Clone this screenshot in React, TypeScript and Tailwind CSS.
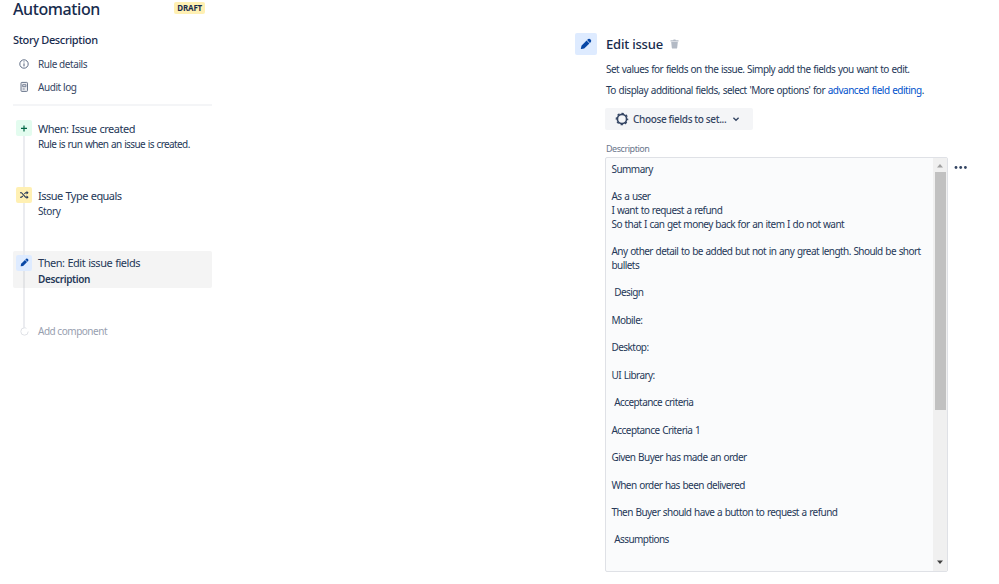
import type { ReactNode } from "react";

type Step = {
  title: string;
  detail: string;
  iconClass: string;
  icon: ReactNode;
  selected?: boolean;
  titleClass: string;
  detailClass: string;
};

function PencilIcon({ size }: { size: number }) {
  return (
    <svg width={size} height={size} viewBox="0 0 12 12" fill="#0747a6">
      <path d="M.9 10.6 1.5 7.8 6.6 2.6 9.4 5.4 4.2 10.5 1.4 11.1Q.8 11.2.9 10.6Z" />
      <path d="M7.1 2.1 8.1 1.1Q9.3.2 10.6 1.4 11.8 2.7 10.9 3.9L9.9 4.9Z" />
    </svg>
  );
}

const steps: Step[] = [
  {
    title: "When: Issue created",
    detail: "Rule is run when an issue is created.",
    iconClass: "bg-[#e3fcef]",
    icon: (
      <svg width="16" height="16" viewBox="0 0 16 16" stroke="#006644" strokeWidth="1.2">
        <path d="M8 5.4v6M5 8.4h6" />
      </svg>
    ),
    titleClass: "pt-px tracking-[-0.48px]",
    detailClass: "tracking-[-0.6px]",
  },
  {
    title: "Issue Type equals",
    detail: "Story",
    iconClass: "bg-[#fff0b3]",
    icon: (
      <svg width="16" height="16" viewBox="0 0 16 16" fill="none" stroke="#253858" strokeWidth="1.1">
        <path d="M4 5.7h1.5l4 4.5h2.3M4 10.2h1.5l1.3-1.4M8.4 7l1.1-1.3h2.3" />
        <path d="M10.7 4.2l1.7 1.5-1.7 1.5zM10.7 8.7l1.7 1.5-1.7 1.5z" fill="#253858" strokeWidth=".3" />
      </svg>
    ),
    titleClass: "pt-px tracking-[-0.54px]",
    detailClass: "tracking-[-0.4px]",
  },
  {
    title: "Then: Edit issue fields",
    detail: "Description",
    iconClass: "bg-[#deebff]",
    icon: <PencilIcon size={9} />,
    selected: true,
    titleClass: "tracking-[-0.48px]",
    detailClass: "pt-px font-semibold tracking-[-0.36px]",
  },
];

const description = [
  "Summary",
  "",
  "As a user",
  "I want to request a refund",
  "So that I can get money back for an item I do not want",
  "",
  "Any other detail to be added but not in any great length. Should be short",
  "bullets",
  "",
  " Design",
  "",
  "Mobile:",
  "",
  "Desktop:",
  "",
  "UI Library:",
  "",
  " Acceptance criteria",
  "",
  "Acceptance Criteria 1",
  "",
  "Given Buyer has made an order",
  "",
  "When order has been delivered",
  "",
  "Then Buyer should have a button to request a refund",
  "",
  " Assumptions",
];

function Sidebar() {
  return (
    <aside className="ml-[13px] w-[199px] shrink-0">
      <div className="flex h-[18px] items-start justify-between pr-[7px]">
        <h1 className="text-[16px] leading-[18px] font-medium tracking-[-0.4px]">Automation</h1>
        <span className="mt-[2px] h-[12px] rounded-[2px] bg-[#fff0b3] px-[3px] text-[8px] leading-[11px] font-bold tracking-[-0.2px]">
          DRAFT
        </span>
      </div>
      <h2 className="mt-[14px] text-[11px] leading-4 font-medium tracking-[-0.35px]">Story Description</h2>
      <nav className="mt-[8px] text-[10px] leading-4 tracking-[-0.42px] text-[#344563]">
        <a className="flex items-center pl-[6px]">
          <svg className="mr-[9px]" width="10" height="10" viewBox="0 0 10 10" fill="none" stroke="#505f79">
            <circle cx="5" cy="5" r="4.2" strokeWidth=".9" />
            <path d="M5 4.4v3M5 2.4v1" />
          </svg>
          Rule details
        </a>
        <a className="mt-[7px] flex items-center pl-[6px]">
          <svg className="mr-[9px]" width="10" height="12" viewBox="0 0 10 12" fill="none" stroke="#6b778c">
            <rect x="2" y="1.4" width="6.5" height="9" rx=".8" fill="#ebecf0" />
            <path d="M3.7 3.7h3.2v2H3.7zM3.7 8h2" strokeWidth=".9" />
          </svg>
          Audit log
        </a>
      </nav>
      <div className="mt-[9px] h-[2px] bg-[#f4f5f7]" />

      <div className="relative mt-[9.9px]">
        <div className="absolute top-[16px] left-[10px] h-[196px] w-[2px] bg-[#ebecf0]" />
        {steps.map((step) => (
          <div key={step.title} className="h-[67.5px]">
            <div
              className={`flex h-[37px] rounded-[2px] pt-[4px] pl-[3px] ${step.selected ? "bg-[#f4f4f4]" : ""}`}
            >
              <span
                className={`relative flex size-4 shrink-0 items-center justify-center rounded-[2px] ${step.iconClass}`}
              >
                {step.icon}
              </span>
              {step.selected && <span className="absolute top-[155px] left-[10px] h-[17px] w-[2px] bg-[#e3e4e6]" />}
              <div className="ml-[6px] [word-spacing:0.6px] whitespace-nowrap text-[#253858]">
                <div className={`text-[11px] leading-4 ${step.titleClass}`}>{step.title}</div>
                <div className={`text-[10px] leading-[15px] ${step.detailClass}`}>{step.detail}</div>
              </div>
            </div>
          </div>
        ))}
        <div className="mt-[5px] flex h-4 items-center pl-[7px]">
          <svg className="relative" width="9" height="9" viewBox="0 0 9 9">
            <circle cx="4.5" cy="4.5" r="3.7" fill="#fff" stroke="#dfe1e6" strokeDasharray="19 5" />
          </svg>
          <span className="ml-[9px] pt-px text-[10px] tracking-[-0.48px] text-[#97a0af]">Add component</span>
        </div>
      </div>
    </aside>
  );
}

function Scrollbar() {
  return (
    <div className="flex w-[14px] shrink-0 flex-col items-center bg-[#f0f0f0]">
      <svg width="14" height="14" viewBox="0 0 14 14">
        <path d="M7 6 L10 9.5 H4 Z" fill="#a0a0a0" />
      </svg>
      <div className="h-[238px] w-[11px] bg-[#c1c1c1]" />
      <svg className="mt-auto" width="14" height="16" viewBox="0 0 14 16">
        <path d="M4 5.5 H10 L7 9 Z" fill="#404040" />
      </svg>
    </div>
  );
}

function EditIssue() {
  return (
    <main className="mt-[33px] ml-[363px] flex">
      <div className="flex size-[22px] items-center justify-center rounded-[2px] bg-[#deebff]">
        <PencilIcon size={12} />
      </div>
      <div className="ml-[8px] w-[343px]">
        <div className="flex h-[22px] items-center pl-px">
          <h2 className="pt-px text-[13px] font-medium tracking-[-0.2px]">Edit issue</h2>
          <svg className="ml-[7px]" width="9" height="10" viewBox="0 0 9 10" fill="#b3bac5">
            <path d="M.5 1.2h2.6L3.6.4h1.8l.5.8h2.6v1.2h-8zM1.2 3.1h6.6L7.2 8.7q-.1.9-1 .9H2.8q-.9 0-1-.9z" />
          </svg>
        </div>
        <p className="mt-[6px] pl-px text-[10px] leading-4 tracking-[-0.53px] [word-spacing:0.6px] whitespace-nowrap text-[#253858]">
          Set values for fields on the issue. Simply add the fields you want to edit.
        </p>
        <p className="mt-[5px] pl-px text-[10px] leading-4 tracking-[-0.5px] [word-spacing:0.6px] whitespace-nowrap text-[#253858]">
          To display additional fields, select 'More options' for{" "}
          <a className="text-[#0052cc]">advanced field editing</a>.
        </p>
        <button className="mt-[10px] flex h-[22px] w-[148px] items-center rounded-[2px] bg-[#f4f5f7] pl-[10px] text-[10px] font-medium text-[#344563]">
          <svg width="14" height="14" viewBox="0 0 14 14" fill="none" stroke="#344563">
            <circle cx="7" cy="7" r="4.6" strokeWidth="1.7" />
            <circle cx="7" cy="7" r="5.7" strokeWidth="1.2" strokeDasharray="2.3 2.177" strokeDashoffset="1.15" />
          </svg>
          <span className="ml-[4px] tracking-[-0.36px] whitespace-nowrap">Choose fields to set...</span>
          <svg className="ml-[6px]" width="8" height="8" viewBox="0 0 8 8" fill="none" stroke="#344563" strokeWidth="1.4">
            <path d="M1.4 2.8 4 5.2l2.6-2.4" />
          </svg>
        </button>
        <div className="mt-[12px] pl-px text-[9px] leading-[14px] tracking-[-0.45px] text-[#6b778c]">Description</div>
        <div className="mt-[1px] flex h-[415px] rounded-[2px] border border-[#dfe1e6] bg-[#fafbfc]">
          <div className="flex-1 overflow-hidden pt-[5px] pl-[5.5px] text-[10px] tracking-[-0.56px] [word-spacing:0.6px] text-[#253858]">
            {description.map((line, i) => (
              <div key={i} className="h-[13.72px] leading-[13.72px] whitespace-pre">
                {line}
              </div>
            ))}
          </div>
          <Scrollbar />
        </div>
      </div>
      <svg className="mt-[132px] ml-[6px]" width="14" height="5" viewBox="0 0 14 5" fill="#344563">
        <circle cx="2" cy="2.5" r="1.4" />
        <circle cx="6.7" cy="2.5" r="1.4" />
        <circle cx="11.4" cy="2.5" r="1.4" />
      </svg>
    </main>
  );
}

export default function App() {
  return (
    <div className="flex h-[584px] w-[999px] items-start overflow-hidden bg-white font-['Noto_Sans',sans-serif] text-[#172b4d]">
      <Sidebar />
      <EditIssue />
    </div>
  );
}
